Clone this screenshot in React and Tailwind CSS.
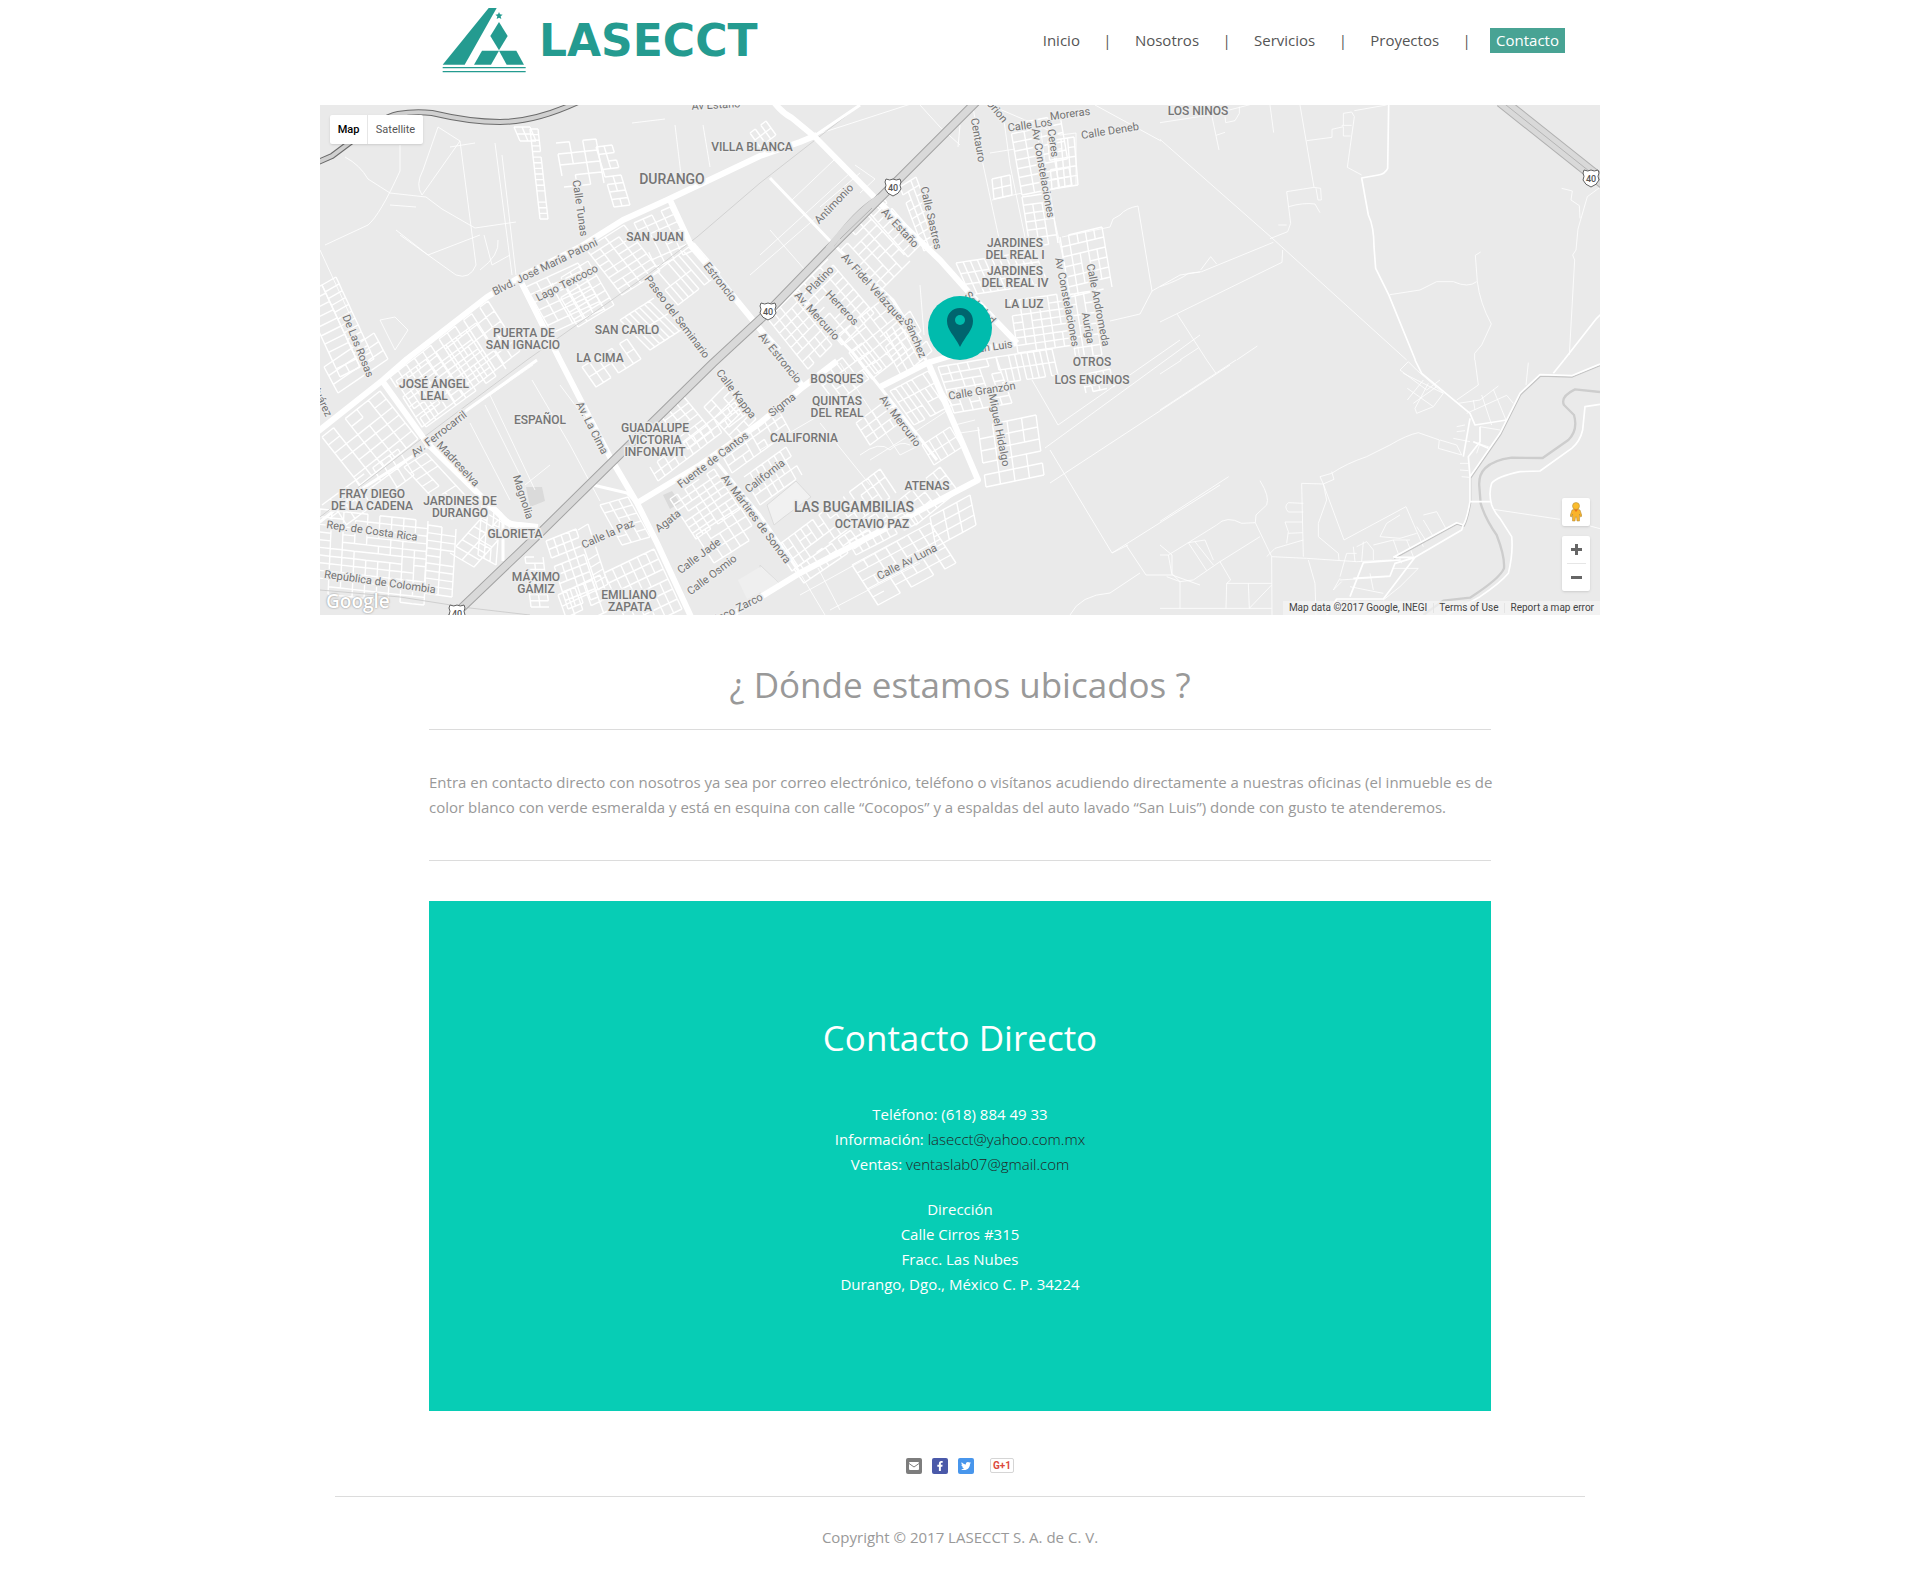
import React from "react";
import { FaFacebookF, FaTwitter } from "react-icons/fa";

/* ---------- map data ---------- */

const majorRoads = [
  "M-4 328 L63 275 L87 254 L167 192 L200 172 L260 142 L303 115 L347 95 L383 78 L440 51 L480 37 L497 30",
  "M453 -4 Q462 8 472 13 L495 32 L560 98 L620 155 L653 192 L697 238",
  "M350 95 L370 138 L440 224 L483 282",
  "M317 398 L380 360 L440 318 L483 282 L517 256",
  "M200 175 L240 255 L290 352 L317 398 L337 438 L372 514",
  "M63 277 L107 338 L180 410 Q188 421 200 420 L218 422",
  "M607 255 L658 375 L480 468 L405 514",
  "M560 282 L607 258 L640 248 L697 238",
];
const mediumRoads = [
  "M-4 420 L40 385 L107 342 L147 305 L217 255",
  "M540 0 L490 34",
  "M450 73 L512 138 L573 195 L598 235 L607 258",
  "M473 185 L533 248 L560 282 L617 355",
  "M395 355 L440 410 L480 468",
  "M183 415 V456",
  "M273 380 L307 388 L317 398",
  "M440 222 L460 244",
  "M110 340 L186 414",
];
const minorRoads = [
  "M653 2 L661 50 L680 138",
  "M683 8 L690 60 L707 142 L716 170",
  "M720 20 L730 95 L742 148 L760 255",
  "M670 48 L695 44 M672 95 L702 88",
  "M742 132 L790 122 L793 114 L800 110 Q806 103 818 101 L832 186 L820 209 L790 216",
  "M832 186 L860 170 L880 167",
  "M670 0 L740 30 L756 28 L756 80",
  "M775 0 L841 36",
  "M76 125 L108 150 L160 130",
  "M118 22 L140 36 L102 90 Q95 80 103 65 L118 22 M140 36 L156 160 Q150 175 136 170 L80 130",
  "M25 52 Q40 60 48 74 L70 88 L106 92 L122 104 L155 123 L196 117",
  "M80 40 L80 66 Q60 110 48 120 L5 140 M70 100 L96 102",
  "M0 145 L30 210",
  "M60 215 L75 212 L88 225 L75 245 Z",
  "M472 95 L514 55 M500 102 L540 68 M495 30 L600 -4",
  "M535 60 L555 74 L540 88",
  "M600 0 L620 22 L640 40 M640 20 L638 42",
  "M440 150 L530 68 M450 125 L485 165 M430 170 L520 92",
  "M600 180 L604 230",
  "M212 275 L250 340 L280 396 M213 260 L170 290 L215 385",
  "M240 280 L285 340 M205 380 L230 360",
  "M165 300 L200 370 M150 318 L190 395",
  "M312 18 L345 14 M355 20 L362 78 M383 20 L390 62",
  "M130 42 L155 38 M175 38 L192 170 M182 50 L196 170",
  "M160 165 Q180 150 178 135 M164 130 L172 160 L190 150",
  "M480 468 L505 510 M498 463 L520 505 M480 490 L585 432 M510 505 L600 458",
  "M440 345 L500 310 M500 318 L550 380",
  "M520 258 L580 350 L600 340",
  "M550 355 L590 330 L628 305",
  "M540 350 Q560 335 570 345 Q580 335 590 340",
  "M655 315 L635 320 M660 325 L640 328",
  "M730 345 L792 448 L808 440 M725 343 L880 230 M712 275 L738 320 L860 235",
  "M792 448 L900 380 M730 378 L910 260",
  "M806 440 L826 470 L852 470 L852 450 L840 440",
  "M750 510 Q760 490 790 488 L820 468 M852 470 L880 480",
];
/* Lines east of the city, drawn on a 3x grid */
const eastUpper = [
  "M0 118 L336 414 L740 780",
  "M0 68 L150 45 L270 14 M155 45 L177 150 M168 106 L195 97 M195 50 L197 68 L225 62 L238 40 L238 20 M330 15 L341 98",
  "M420 15 L462 262 L380 275 L392 370 L383 395 L330 416",
  "M386 320 Q430 307 465 312 L480 338 M462 262 L482 265 L484 300 L474 300 L468 265 M355 375 L380 375",
  "M440 122 L516 112 L516 88 L550 80 L550 108 L572 108 M545 76 L575 76 M550 76 L550 40 L575 36 L583 50 L562 202 L605 225 M583 32 L680 15",
  "M0 560 Q60 540 85 520 L125 515 L340 427 M122 510 L152 470 L170 492",
  "M0 666 L366 487 L368 450 M52 643 L140 780 M60 780 L115 744 M230 780 L292 738",
  "M690 584 L780 570 L830 545 L880 545 Q925 565 950 545 M962 456 L946 466 L952 545 Q960 610 994 672 L965 735 L944 760 L944 780",
  "M1205 265 L1237 273 L1233 300 L1258 317 L1260 355",
  "M1320 262 L1282 290 L1254 387 L1248 450 L1238 465 L1244 480 L1228 765",
];
const eastUpperBold = [
  "M686 15 L683 205 Q675 222 655 225 L605 234 L625 345 Q642 380 642 440 L647 505 L686 584 L766 780",
  "M1212 780 L1310 655 L1324 642",
];
const eastLower = [
  "M0 150 L228 0 M0 42 L65 0 M140 0 L168 40 M0 484 L206 350",
  "M945 0 L955 75 L890 120 M1105 8 L1098 75",
  "M720 30 L745 5 L770 30 L850 100 M720 30 L800 90 L840 60 M730 40 L850 100 L820 140 L770 160 L765 145 L805 70 M742 85 L820 140 M742 120 L790 60 M760 130 L830 80",
  "M895 130 L960 120 L1015 78 M920 160 L1040 106 L1060 130 M965 105 L995 195 M1000 88 L1038 180 M940 120 L945 150",
  "M835 265 L838 240 L775 218 Q740 225 690 255 L620 290 Q560 310 515 340 L480 350 L490 372 L522 358 L515 335 M490 372 L552 540 L738 440 L790 560 M490 372 L500 420 L475 490 L475 530 L535 580 L537 600",
  "M425 370 L490 372 M425 370 L430 590 M430 430 L385 428 Q370 440 385 456 L430 456 M375 486 L428 486 M375 486 L385 515 L380 550 M385 520 L428 518",
  "M300 362 Q330 410 320 435 L288 465 L286 488 L335 590 L336 765 M286 488 L245 490 Q200 465 170 495 L85 548 L25 585 L35 640 L60 665 L100 660 L180 605 L300 530 M0 585 L25 585 M85 548 L140 632 M105 545 L160 615 M85 548 L135 540 L160 600 M180 605 L212 660 L200 670 L335 670 M200 670 L198 745 M0 745 L335 745 M60 665 L60 745 M265 670 L268 745 L335 675 M20 650 L60 665",
  "M320 590 L345 565 L430 540 M335 590 L440 595 L590 605 L695 600 M445 600 L465 670 L468 765",
  "M590 560 L620 545 L640 570 L640 600 M540 650 L560 580 L590 580 M520 690 L540 655 M585 605 L580 560 M610 545 L605 605 M660 530 L680 490 L720 465 M660 530 L720 535 L770 520 M640 555 L700 540 L750 540 M700 540 L725 610 M740 540 L760 590 M790 465 L830 455 L860 510 M790 480 L820 530 M770 500 L800 545",
  "M540 660 L690 650 M570 680 L670 700 M630 640 L640 690 M520 690 L545 665 M700 625 L775 625 L720 680 L670 720",
  "M840 240 L890 255 L905 285 M835 265 L905 285 M880 235 L930 245 M890 200 L915 195 M890 215 L915 212 M900 310 L925 310 M900 330 L925 332 M905 350 L928 352 M960 200 L1020 210 M940 245 L990 262 M960 250 L950 280",
  "M1000 448 L1200 478 M1290 498 L1320 506",
];
const eastLowerBold = [
  "M765 0 L785 40 L930 160 L945 195 L1040 180 M930 175 L910 290 M960 200 L960 245 L925 290 L930 350 M940 245 L985 265",
  "M1320 12 L1235 47 L1140 44 L1080 100 L1020 220 L930 350 L930 425 Q920 480 910 495 L890 488 L700 592",
  "M1212 0 L1180 40",
  "M910 495 L905 510 L765 592 L670 717 L530 717 L500 765 M700 592 L765 592 M570 710 L610 608 L720 600",
  "M580 655 L690 648 L705 610 L765 592",
  "M1320 133 L1275 140 L1268 210 Q1260 245 1235 265 L1140 333 L1080 335 Q1010 350 995 370 Q985 400 995 435 Q1005 460 1020 475 L1055 530 Q1060 580 1045 640 Q1020 670 960 710 L860 765",
  "M930 425 L992 425",
];
const river =
  "M1320 96 L1245 88 Q1200 110 1212 135 L1242 165 Q1255 210 1225 240 L1148 294 L1055 293 Q1000 300 975 325 Q955 345 958 380 L962 430 Q975 475 1010 525 Q1035 590 1032 625 Q1020 655 930 713 L850 722 L790 765";

/* Street blocks: origin, side u, side v, cells along u, cells along v */
const blocks = [
  [2, 180, 38, 82, -20, 10, 10, 1],
  [2, 180, 38, 82, 14, -8, 12, 1],
  [70, 272, 98, -76, 32, 50, 12, 5],
  [206, 182, 52, -24, 26, 46, 5, 6],
  [232, 178, 36, -22, 26, 44, 4, 6],
  [266, 144, 38, -24, 36, 46, 4, 8],
  [314, 118, 36, -16, 22, 44, 4, 6],
  [332, 170, 42, -32, 26, 30, 8, 2],
  [300, 215, 34, -22, 30, 30, 7, 2],
  [262, 262, 45, -28, 14, 20, 6, 2],
  [0, 404, 108, 12, -4, 84, 9, 11],
  [108, 420, 28, 4, -4, 68, 2, 9],
  [76, 276, 80, -58, 30, 46, 8, 5],
  [2, 332, 58, -46, 38, 48, 5, 6],
  [2, 400, 76, -56, 16, 26, 9, 2],
  [4, 262, 50, -34, 14, 26, 3, 3],
  [84, 362, 22, -14, 48, 52, 2, 8],
  [130, 448, 36, -40, 24, 14, 6, 2],
  [162, 400, 18, 10, -4, 50, 3, 4],
  [205, 452, 18, 0, 6, 50, 2, 8],
  [226, 436, 30, -12, 22, 68, 4, 8],
  [258, 425, 10, -6, 20, 60, 1, 8],
  [284, 468, 50, -24, 28, 60, 6, 6],
  [238, 490, 42, -20, 12, 34, 5, 3],
  [280, 400, 28, -8, 22, 40, 3, 5],
  [350, 394, 44, -30, 26, 40, 6, 7],
  [376, 430, 44, -28, 18, 28, 5, 3],
  [330, 362, 92, -70, 8, 14, 13, 2],
  [340, 310, 24, -18, 28, 34, 3, 6],
  [384, 302, 22, -22, 30, 34, 3, 6],
  [400, 346, 58, -42, 12, 22, 8, 3],
  [424, 372, 42, -30, 16, 28, 7, 3],
  [448, 214, 30, -30, 40, 50, 5, 7],
  [476, 186, 32, -32, 46, 54, 4, 9],
  [514, 140, 32, -32, 44, 48, 4, 8],
  [548, 106, 14, -14, 40, 46, 2, 8],
  [580, 82, 16, -10, 24, 64, 3, 8],
  [518, 230, 50, -40, 34, 44, 7, 5],
  [560, 232, 30, -26, 22, 40, 5, 4],
  [496, 272, 46, -34, 20, 26, 7, 3],
  [570, 286, 38, -20, 24, 34, 7, 3],
  [536, 318, 32, -24, 14, 22, 4, 3],
  [602, 340, 28, -18, 12, 20, 4, 2],
  [456, 442, 104, -78, 16, 24, 17, 3],
  [474, 464, 88, -60, 10, 14, 14, 2],
  [578, 396, 42, -34, 18, 24, 6, 3],
  [528, 436, 62, -32, 8, 14, 9, 2],
  [532, 460, 78, -42, 26, 40, 7, 5],
  [610, 412, 40, -22, 6, 30, 3, 3],
  [658, 322, 58, -12, 8, 60, 4, 5],
  [618, 262, 58, -10, 16, 46, 6, 6],
  [676, 252, 56, -8, 6, 26, 9, 2],
  [636, 158, 78, -12, 14, 32, 11, 3],
  [690, 196, 56, -8, 8, 52, 6, 7],
  [746, 190, 26, -4, 10, 64, 3, 6],
  [690, 20, 50, -10, 12, 70, 4, 8],
  [728, 36, 26, -4, 4, 48, 4, 5],
  [702, 92, 28, -4, 8, 50, 3, 6],
  [740, 132, 42, -10, 10, 60, 5, 6],
  [672, 74, 18, -4, 2, 20, 2, 2],
  [210, 24, 8, 0, 10, 90, 1, 16],
  [194, 22, 16, 0, 6, 14, 2, 2],
  [236, 38, 40, -4, 8, 44, 3, 4],
  [276, 42, 16, -2, 18, 60, 2, 8],
  [430, 28, 16, -12, 10, 14, 3, 2],
  [762, 270, 28, -6, 4, 18, 4, 3],
];

const blockPath = (b, seed) => {
  const [x, y, ux, uy, vx, vy, n, m] = b;
  let s = seed * 7919 + 13;
  const rnd = () => {
    s = (s * 1103515245 + 12345) % 2147483648;
    return s / 2147483648;
  };
  const pt = (i, j) =>
    (x + (ux * i) / n + (vx * j) / m).toFixed(1) + " " + (y + (uy * i) / n + (vy * j) / m).toFixed(1);
  let d = "";
  for (let i = 0; i <= n; i++)
    for (let j = 0; j < m; j++) if (rnd() > 0.1) d += "M" + pt(i, j) + "L" + pt(i, j + 1);
  for (let j = 0; j <= m; j++)
    for (let i = 0; i < n; i++) if (rnd() > 0.1) d += "M" + pt(i, j) + "L" + pt(i + 1, j);
  return d;
};

const districts = [
  ["VILLA BLANCA", 432, 46],
  ["SAN JUAN", 335, 136],
  ["PUERTA DE", 204, 232],
  ["SAN IGNACIO", 203, 244],
  ["SAN CARLO", 307, 229],
  ["LA CIMA", 280, 257],
  ["JARDINES", 695, 142],
  ["DEL REAL I", 695, 154],
  ["JARDINES", 695, 170],
  ["DEL REAL IV", 695, 182],
  ["LA LUZ", 704, 203],
  ["OTROS", 772, 261],
  ["LOS ENCINOS", 772, 279],
  ["LOS NIÑOS", 878, 10],
  ["JOSÉ ÁNGEL", 114, 283],
  ["LEAL", 114, 295],
  ["ESPAÑOL", 220, 319],
  ["GUADALUPE", 335, 327],
  ["VICTORIA", 335, 339],
  ["INFONAVIT", 335, 351],
  ["FRAY DIEGO", 52, 393],
  ["DE LA CADENA", 52, 405],
  ["JARDINES DE", 140, 400],
  ["DURANGO", 140, 412],
  ["GLORIETA", 195, 433],
  ["MÁXIMO", 216, 476],
  ["GÁMIZ", 216, 488],
  ["EMILIANO", 309, 494],
  ["ZAPATA", 310, 506],
  ["BOSQUES", 517, 278],
  ["QUINTAS", 517, 300],
  ["DEL REAL", 517, 312],
  ["CALIFORNIA", 484, 337],
  ["ATENAS", 607, 385],
  ["OCTAVIO PAZ", 552, 423],
];
const towns = [
  ["DURANGO", 352, 79],
  ["LAS BUGAMBILIAS", 534, 407],
];
const streets = [
  ["Blvd. José María Patoni", 225, 162, -26],
  ["Lago Texcoco", 247, 178, -27],
  ["Calle Tunas", 260, 103, 82],
  ["Estroncio", 400, 177, 52],
  ["Paseo del Seminario", 357, 212, 53],
  ["De Las Rosas", 38, 241, 68],
  ["Av Estaño", 396, 0, -3],
  ["Antimonio", 514, 99, -46],
  ["Av Estaño", 580, 123, 47],
  ["Calle Sastres", 611, 113, 77],
  ["Centauro", 658, 35, 80],
  ["Orion", 677, 6, 50],
  ["Calle Los", 710, 20, -8],
  ["Moreras", 750, 9, -8],
  ["Calle Deneb", 790, 26, -9],
  ["Ceres", 733, 38, 82],
  ["Av Constelaciones", 723, 68, 80],
  ["Av Constelaciones", 747, 197, 79],
  ["Calle Andromeda", 778, 200, 79],
  ["Auriga", 768, 223, 80],
  ["Av Fidel Velázquez", 554, 184, 48],
  ["Sánchez", 595, 233, 67],
  ["Platino", 500, 175, -46],
  ["Herreros", 522, 203, 47],
  ["Av. Mercurio", 497, 211, 48],
  ["Av. Mercurio", 580, 316, 53],
  ["Av Estroncio", 460, 253, 51],
  ["Soledad", 660, 203, 47],
  ["San Luis", 672, 242, -8],
  ["Sigma", 462, 300, -38],
  ["Calle Kappa", 416, 289, 53],
  ["Fuente de Cantos", 393, 355, -37],
  ["California", 445, 371, -38],
  ["Av. La Cima", 272, 323, 63],
  ["Av. Ferrocarril", 119, 329, -38],
  ["Madreselva", 138, 359, 47],
  ["Magnolia", 203, 392, 72],
  ["Juárez", 2, 296, 65],
  ["Rep. de Costa Rica", 52, 426, 8],
  ["República de Colombia", 60, 477, 8],
  ["Calle la Paz", 288, 429, -24],
  ["Agata", 348, 416, -38],
  ["Calle Jade", 379, 451, -37],
  ["Calle Osmio", 392, 470, -37],
  ["Av Mártires de Sonora", 436, 414, 53],
  ["Francisco Zarco", 407, 509, -27],
  ["Calle Granzón", 662, 286, -9],
  ["Miguel Hidalgo", 679, 325, 79],
  ["Calle Av Luna", 587, 457, -27],
];

function Shield({ x, y }) {
  return (
    <g transform={`translate(${x} ${y})`}>
      <path
        d="M-7 -8 Q-3 -6 0 -8 Q3 -6 7 -8 L8 -5 Q6 -2 8 2 Q6 7 0 9 Q-6 7 -8 2 Q-6 -2 -8 -5 Z"
        fill="#fff"
        stroke="#616161"
        strokeWidth="1"
      />
      <text textAnchor="middle" y="4" fontSize="9" fontWeight="500" fill="#555">
        40
      </text>
    </g>
  );
}

function MapDrawing() {
  return (
    <svg
      viewBox="0 0 1280 510"
      preserveAspectRatio="xMidYMid slice"
      className="block h-full w-full"
      role="img"
      aria-label="Mapa de Durango"
      fontFamily="Roboto, sans-serif"
    >
      <rect width="1280" height="510" fill="#eaeaea" />
      <path d="M447 400 L476 376 L491 392 L464 412 L454 420 Z M440 460 L459 478 L440 491 Z" fill="#f1f1f1" stroke="#dcdcdc" />
      <path d="M206 382 L222 382 L225 396 L210 402 Z M343 390 L352 386 L360 398 L350 404 Z" fill="#dadada" />
      <path d="M418 475 L440 462 L459 478 L427 494 Z" fill="#efefef" />

      <g fill="none" stroke="#fff" strokeLinejoin="round">
        {blocks.map((b, i) => (
          <path key={i} d={blockPath(b, i + 1)} strokeWidth="1.4" />
        ))}
        <path d={minorRoads.join(" ")} strokeWidth="1" opacity="0.85" />
        <g transform="translate(840 -5) scale(0.33333)">
          <path d={eastUpper.join(" ")} strokeWidth="3" opacity="0.8" />
          <path d={eastUpperBold.join(" ")} strokeWidth="5" />
        </g>
        <g transform="translate(840 255) scale(0.33333)">
          <path d={river} stroke="#cdcdcd" strokeWidth="7" />
          <path d={eastLower.join(" ")} strokeWidth="3" opacity="0.8" />
          <path d={eastLowerBold[1]} stroke="#c4c4c4" strokeWidth="4" transform="translate(2 4)" />
          <path d={eastLowerBold.join(" ")} strokeWidth="5" />
        </g>
        <path d="M540 0 L440 78 L377 132 L330 168 L207 255 L100 335 L0 412" stroke="#d2d2d2" strokeWidth="1" />
        <path d="M0 485 L80 492 L150 503 L210 510" stroke="#cfcfcf" />
        <path d={mediumRoads.join(" ")} strokeWidth="3" />
        <path d={majorRoads.join(" ")} strokeWidth="6" />
      </g>

      <g fill="none" strokeLinejoin="round">
        <path d="M656 -3 L573 80 L507 146 L447 208 L393 258 L287 362 L220 428 L128 516" stroke="#a3a3a3" strokeWidth="9" />
        <path d="M656 -3 L573 80 L507 146 L447 208 L393 258 L287 362 L220 428 L128 516" stroke="#d9d9d9" strokeWidth="7" />
        <path d="M557 94 Q536 106 512 140" stroke="#a8a8a8" strokeWidth="5" />
        <path d="M560 92 Q536 108 508 144" stroke="#dadada" strokeWidth="6" />
        <path d="M552 103 L520 134" stroke="#b3b3b3" strokeWidth="1" />
        <path d="M-4 58 L12 51 L32 36 Q60 13 78 9 Q95 6 112 8 Q150 17 180 17 Q215 17 258 -3" stroke="#6b6b6b" strokeWidth="6" />
        <path d="M-4 58 L12 51 L32 36 Q60 13 78 9 Q95 6 112 8 Q150 17 180 17 Q215 17 258 -3" stroke="#d0d0d0" strokeWidth="4" />
        <path d="M1181 -4 L1284 78" stroke="#b0b0b0" strokeWidth="13" />
        <path d="M1181 -4 L1284 78" stroke="#d9d9d9" strokeWidth="11" />
        <path d="M1181 -4 L1284 78" stroke="#b5b5b5" strokeWidth="1" />
      </g>

      <Shield x={573} y={82} />
      <Shield x={448} y={206} />
      <Shield x={1271} y={73} />
      <Shield x={137} y={508} />

      <g textAnchor="middle" stroke="#ededed" strokeWidth="3" strokeLinejoin="round" style={{ paintOrder: "stroke" }}>
        <g fontSize="11" fill="#737373">
          {streets.map(([t, x, y, r], i) => (
            <text key={i} x={x} y={y} dominantBaseline="central" transform={`rotate(${r} ${x} ${y})`}>
              {t}
            </text>
          ))}
        </g>
        <g fontSize="12" fontWeight="500" fill="#757575">
          {districts.map(([t, x, y], i) => (
            <text key={i} x={x} y={y}>
              {t}
            </text>
          ))}
        </g>
        <g fontSize="14" fontWeight="500" fill="#757575">
          {towns.map(([t, x, y]) => (
            <text key={t} x={x} y={y}>
              {t}
            </text>
          ))}
        </g>
      </g>

      <circle cx="640" cy="223" r="32" fill="#00bbad" />
      <path d="M640 203 C632 203 627 209 627 216 C627 225 634 230 640 242 C646 230 653 225 653 216 C653 209 648 203 640 203 Z" fill="#00646e" />
      <circle cx="640" cy="215" r="5" fill="#00bbad" />
    </svg>
  );
}

/* ---------- page parts ---------- */

function Logo() {
  return (
    <a href="#inicio" className="flex items-center gap-3 text-[#249b90]" aria-label="LASECCT">
      <svg width="85" height="66" viewBox="0 0 255 198" aria-hidden="true">
        <g fill="#249b90">
          <path d="M140 0 H164 L68 170 H2 Z" />
          <path d="M171 12 L174 19 L182 20 L176 25 L178 33 L171 29 L164 33 L166 25 L160 20 L168 19 Z" />
          <path d="M171 42 L197 84 L171 127 L145 84 Z" />
          <path d="M120 128 H171 L147 170 H96 Z" />
          <path d="M171 128 H223 L246 170 H194 Z" />
          <path d="M2 177 H251 V181 H2 Z M2 189 H251 V193 H2 Z" />
        </g>
      </svg>
      <span className="font-['DejaVu_Sans'] text-[44px] leading-none font-bold">LASECCT</span>
    </a>
  );
}

const links = ["Inicio", "Nosotros", "Servicios", "Proyectos"];

function Nav() {
  return (
    <nav className="flex items-center text-[15px] leading-[25px] text-[#555]">
      {links.map((l) => (
        <React.Fragment key={l}>
          <a href={"#" + l.toLowerCase()}>{l}</a>
          <span className="w-[55px] text-center">|</span>
        </React.Fragment>
      ))}
      <a href="#contacto" aria-current="page" className="-ml-1 bg-[#48a394] px-1.5 text-white">
        Contacto
      </a>
    </nav>
  );
}

function MapPanel() {
  return (
    <section className="relative mx-auto h-[510px] w-full max-w-[1280px] overflow-hidden font-[Roboto,sans-serif]">
      <MapDrawing />
      <div className="absolute top-2.5 left-2.5 flex h-[29px] rounded-xs bg-white text-[11px] shadow">
        <button type="button" className="w-[38px] border-r border-[#e6e6e6] font-medium text-black">
          Map
        </button>
        <button type="button" className="w-[55px] text-[#565656]">
          Satellite
        </button>
      </div>
      <div className="absolute right-2.5 bottom-6 flex w-7 flex-col gap-2.5">
        <button type="button" aria-label="Street View" className="flex h-7 items-center justify-center rounded-xs bg-white shadow">
          <svg width="12" height="20" viewBox="0 0 12 20" aria-hidden="true">
            <path
              d="M2 8 Q6 6 10 8 L12 14 L10.500 15 L9.500 12 V19 H7 L6.500 15 H5.500 L5 19 H2.500 V12 L1.500 15 L0 14 Z"
              fill="#f9b32a"
              stroke="#a98538"
              strokeWidth="0.500"
            />
            <circle cx="6" cy="4" r="3.500" fill="#fbbc2c" stroke="#a98538" strokeWidth="0.500" />
            <path d="M4 7.500 H8 L6 10 Z" fill="#e8731c" />
          </svg>
        </button>
        <div className="flex h-[55px] flex-col items-center rounded-xs bg-white shadow">
          <button type="button" aria-label="Zoom in" className="flex w-7 flex-1 items-center justify-center">
            <svg width="11" height="11" aria-hidden="true">
              <path d="M4 0 H7 V4 H11 V7 H7 V11 H4 V7 H0 V4 H4 Z" fill="#666" />
            </svg>
          </button>
          <span className="h-px w-[19px] bg-[#e6e6e6]" />
          <button type="button" aria-label="Zoom out" className="flex w-7 flex-1 items-center justify-center">
            <svg width="11" height="3" aria-hidden="true">
              <rect width="11" height="3" fill="#666" />
            </svg>
          </button>
        </div>
      </div>
      <span className="absolute bottom-1 left-[6px] font-['Open_Sans'] text-[19px] leading-none font-semibold text-white [text-shadow:0_0_2px_#777]">
        Google
      </span>
      <div className="absolute right-0 bottom-0 flex h-3.5 items-center bg-[#f5f5f5]/70 text-[10px] leading-none text-[#444]">
        <span className="px-1.5">Map data ©2017 Google, INEGI</span>
        <a href="#terms" className="border-l border-[#e4e4e4] px-[5px]">
          Terms of Use
        </a>
        <a href="#report" className="border-l border-[#e4e4e4] px-1.5">
          Report a map error
        </a>
      </div>
    </section>
  );
}

function Social() {
  return (
    <div className="flex h-4 items-center justify-center gap-2.5">
      <a href="#mail" aria-label="Correo" className="flex size-4 items-center justify-center rounded-xs bg-[#7d7d7d]">
        <svg width="10" height="8" viewBox="0 0 10 8" aria-hidden="true">
          <rect width="10" height="8" rx="1" fill="#fff" />
          <path d="M0 1.500 L5 5 L10 1.500" fill="none" stroke="#7d7d7d" strokeWidth="1" />
        </svg>
      </a>
      <a href="#facebook" aria-label="Facebook" className="flex size-4 items-center justify-center rounded-xs bg-[#4a59a9] text-white">
        <FaFacebookF size={10} />
      </a>
      <a href="#twitter" aria-label="Twitter" className="flex size-4 items-center justify-center rounded-xs bg-[#4896ec] text-white">
        <FaTwitter size={10} />
      </a>
      <button
        type="button"
        className="ml-1.5 flex h-[15px] w-6 items-center justify-center self-start rounded-xs border border-[#d5d5d5] bg-white font-[Roboto,sans-serif] text-[10px] leading-none font-bold text-[#dc4a3d]"
      >
        G+1
      </button>
    </div>
  );
}

export default function App() {
  return (
    <div className="w-full bg-white pb-6 font-['Open_Sans',sans-serif] text-[15px] leading-[25px] text-[#999]">
      <header className="mx-auto flex h-[105px] w-full max-w-[1280px] items-start justify-between pr-[35px] pl-[122px]">
        <div className="pt-2">
          <Logo />
        </div>
        <div className="pt-7">
          <Nav />
        </div>
      </header>

      <MapPanel />

      <main className="mx-auto w-full max-w-[1062px]">
        <h1 className="pt-[45px] text-center text-[35px] leading-[50px]">¿ Dónde estamos ubicados ?</h1>
        <hr className="mt-[19px] border-[#dcdcdc]" />
        <p className="-mr-5 py-10">
          Entra en contacto directo con nosotros ya sea por correo electrónico, teléfono o visítanos acudiendo
          directamente a nuestras oficinas (el inmueble es de color blanco con verde esmeralda y está en esquina con
          calle “Cocopos” y a espaldas del auto lavado “San Luis”) donde con gusto te atenderemos.
        </p>
        <hr className="border-[#dcdcdc]" />

        <section className="mt-10 flex h-[510px] flex-col items-center bg-[#07cdb5] pt-[112px] text-center text-white">
          <h2 className="text-[35px] leading-[50px]">Contacto Directo</h2>
          <p className="mt-[39px]">
            Teléfono: (618) 884 49 33
            <br />
            Información:{" "}
            <a href="mailto:lasecct@yahoo.com.mx" className="font-light text-[#222]">
              lasecct@yahoo.com.mx
            </a>
            <br />
            Ventas:{" "}
            <a href="mailto:ventaslab07@gmail.com" className="font-light text-[#222]">
              ventaslab07@gmail.com
            </a>
          </p>
          <address className="mt-5 not-italic">
            Dirección
            <br />
            Calle Cirros #315
            <br />
            Fracc. Las Nubes
            <br />
            Durango, Dgo., México C. P. 34224
          </address>
        </section>
      </main>

      <footer className="mx-auto mt-[47px] w-full max-w-[1250px]">
        <Social />
        <hr className="mt-[22px] border-[#dcdcdc]" />
        <p className="mt-7 text-center">Copyright © 2017 LASECCT S. A. de C. V.</p>
      </footer>
    </div>
  );
}
